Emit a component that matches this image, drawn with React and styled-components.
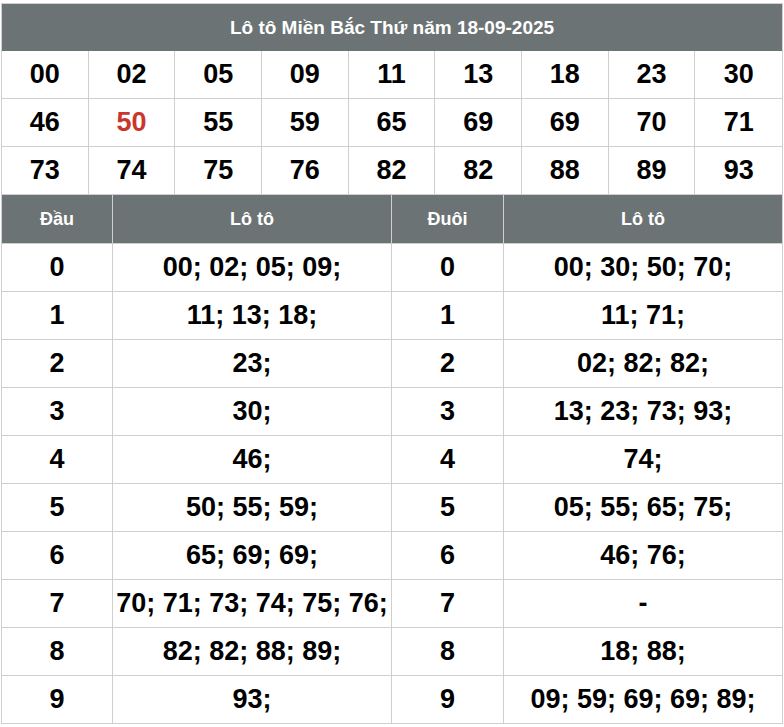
import styled, { createGlobalStyle } from 'styled-components';

const GlobalStyle = createGlobalStyle`
  body {
    margin: 0;
    background: #ffffff;
    font-family: "Liberation Sans", Arial, sans-serif;
  }
`;

const numbers = [
  '00', '02', '05', '09', '11', '13', '18', '23', '30',
  '46', '50', '55', '59', '65', '69', '69', '70', '71',
  '73', '74', '75', '76', '82', '82', '88', '89', '93',
];

const rows = [
  ['00; 02; 05; 09;', '00; 30; 50; 70;'],
  ['11; 13; 18;', '11; 71;'],
  ['23;', '02; 82; 82;'],
  ['30;', '13; 23; 73; 93;'],
  ['46;', '74;'],
  ['50; 55; 59;', '05; 55; 65; 75;'],
  ['65; 69; 69;', '46; 76;'],
  ['70; 71; 73; 74; 75; 76;', '-'],
  ['82; 82; 88; 89;', '18; 88;'],
  ['93;', '09; 59; 69; 69; 89;'],
];

const Wrap = styled.div`
  padding: 3px 1px 0 1px;
`;

const Board = styled.div`
  width: 782px;
  border: 1px solid #cfcfcf;
  border-bottom: none;
  box-sizing: border-box;
`;

const Title = styled.div`
  height: 47px;
  background: #6c7374;
  color: #ffffff;
  font-size: 19px;
  font-weight: bold;
  display: flex;
  align-items: center;
  justify-content: center;
`;

const NumGrid = styled.div`
  display: grid;
  grid-template-columns: repeat(9, 1fr);
`;

const NumCell = styled.div`
  height: 47px;
  border-bottom: 1px solid #cfcfcf;
  border-right: ${p => (p.$last ? 'none' : '1px solid #cfcfcf')};
  display: flex;
  align-items: center;
  justify-content: center;
  font-size: 27px;
  font-weight: bold;
  color: ${p => (p.$hot ? '#c9372c' : '#000000')};
`;

const Row = styled.div`
  display: grid;
  grid-template-columns: 111px 279px 112px 1fr;
`;

const HeadCell = styled.div`
  height: 48px;
  background: #6c7374;
  color: #ffffff;
  font-size: 18px;
  font-weight: bold;
  display: flex;
  align-items: center;
  justify-content: center;
  border-right: ${p => (p.$last ? 'none' : '1px solid #cfcfcf')};
  border-bottom: 1px solid #cfcfcf;
`;

const Cell = styled.div`
  height: 47px;
  display: flex;
  align-items: center;
  justify-content: center;
  font-size: 27px;
  font-weight: bold;
  color: #000000;
  white-space: nowrap;
  border-right: ${p => (p.$last ? 'none' : '1px solid #cfcfcf')};
  border-bottom: 1px solid #cfcfcf;
`;

export default function App() {
  return (
    <>
      <GlobalStyle />
      <Wrap>
        <Board>
          <Title>Lô tô Miền Bắc Thứ năm 18-09-2025</Title>
          <NumGrid>
            {numbers.map((n, i) => (
              <NumCell key={i} $hot={i === 10} $last={i % 9 === 8}>
                {n}
              </NumCell>
            ))}
          </NumGrid>
          <Row>
            <HeadCell>Đầu</HeadCell>
            <HeadCell>Lô tô</HeadCell>
            <HeadCell>Đuôi</HeadCell>
            <HeadCell $last>Lô tô</HeadCell>
          </Row>
          {rows.map((r, i) => (
            <Row key={i}>
              <Cell>{i}</Cell>
              <Cell>{r[0]}</Cell>
              <Cell>{i}</Cell>
              <Cell $last>{r[1]}</Cell>
            </Row>
          ))}
        </Board>
      </Wrap>
    </>
  );
}
